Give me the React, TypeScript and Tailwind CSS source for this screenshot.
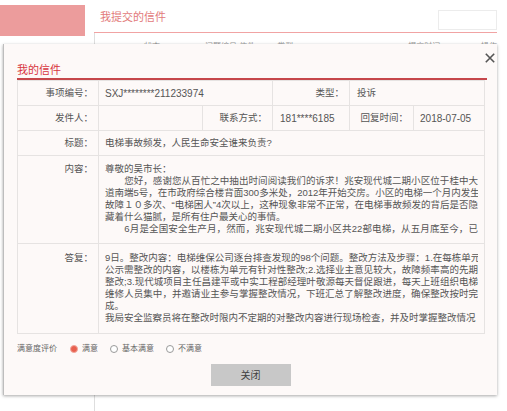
import React from 'react';

type Line = { text: string; full: boolean };

const contentLines: Line[] = [
  { text: '尊敬的吴市长：', full: false },
  { text: '\u3000\u3000您好，感谢您从百忙之中抽出时间阅读我们的诉求！兆安现代城二期小区位于桂中大', full: true },
  { text: '道南端5号，在市政府综合楼背面300多米处，2012年开始交房。小区的电梯一个月内发生', full: true },
  { text: '故障１０多次、“电梯困人”4次以上，这种现象非常不正常，在电梯事故频发的背后是否隐', full: true },
  { text: '藏着什么猫腻，是所有住户最关心的事情。', full: false },
  { text: '\u3000\u30006月是全国安全生产月，然而，兆安现代城二期小区共22部电梯，从五月底至今，已', full: true },
];

const replyLines: Line[] = [
  { text: '9日。整改内容：电梯维保公司逐台排查发现的98个问题。整改方法及步骤：1.在每栋单元', full: true },
  { text: '公示需整改的内容，以楼栋为单元有针对性整改;2.选择业主意见较大，故障频率高的先期', full: true },
  { text: '整改;3.现代城项目主任昌建平或中实工程部经理叶敬源每天督促跟进，每天上班组织电梯', full: true },
  { text: '维修人员集中，并邀请业主参与掌握整改情况，下班汇总了解整改进度，确保整改按时完', full: true },
  { text: '成。', full: false },
  { text: '我局安全监察员将在整改时限内不定期的对整改内容进行现场检查，并及时掌握整改情况', full: false },
];

const Lines: React.FC<{ lines: Line[] }> = ({ lines }) => (
  <>
    {lines.map((l, i) => (
      <div
        key={i}
        className={`whitespace-nowrap leading-[12px] ${l.full ? 'text-justify [text-align-last:justify]' : ''}`}
      >
        {l.text}
      </div>
    ))}
  </>
);

const Label: React.FC<{ children: React.ReactNode; top?: boolean; pt?: string }> = ({ children, top, pt }) => (
  <td
    className={`border border-[#e6e3e2] pr-[5px] text-right ${top ? `align-top ${pt}` : 'align-middle'}`}
  >
    {children}
  </td>
);

const Radio: React.FC<{ checked?: boolean; label: string }> = ({ checked, label }) => (
  <label className="flex items-center gap-[4px]">
    {checked ? (
      <span className="block h-[8px] w-[8px] rounded-full border border-[#f2a79c] bg-[#e8604f]" />
    ) : (
      <span className="block h-[8px] w-[8px] rounded-full border border-[#9a9a9a] bg-white" />
    )}
    <span>{label}</span>
  </label>
);

export default function App() {
  return (
    <div className="relative h-[411px] w-[507px] overflow-hidden bg-white font-['Liberation_Sans','Noto_Sans_CJK_SC',sans-serif]">
      {/* page behind the dialog */}
      <div className="flex">
        <div className="mt-[5px] h-[31px] w-[85px] bg-[#ec9c9c]" />
        <div className="ml-[9px] mr-[10px] flex-1">
          <div className="flex h-[33px] items-start justify-between border-b border-[#f1a3a3]">
            <span className="mt-[10px] pl-[6px] text-[11px] leading-[14px] text-[#e27a7a]">我提交的信件</span>
            <div className="mt-[10px] h-[20px] w-[59px] border border-[#ececec]" />
          </div>
          <div className="flex h-[28px] items-center border-l border-[#dedede] text-[8px] text-[#999]">
            <span className="ml-[49px]">状态</span>
            <span className="ml-[45px]">问题编号/信件</span>
            <span className="ml-[22px]">类型</span>
            <span className="ml-[115px]">提交时间</span>
            <span className="ml-auto">操作</span>
          </div>
          <div className="h-[400px] border-l border-[#dedede]" />
        </div>
      </div>

      {/* dialog */}
      <div className="absolute left-[3px] top-[44px] h-[351px] w-[494px] border-l border-[#bdbdbd] bg-[#fdf9f8] pl-[13px] pr-[10px] shadow-[0_1px_3px_rgba(0,0,0,0.35)]">
        <button className="absolute right-[2px] top-[9px] h-[10px] w-[10px] text-[#555]">
          <svg viewBox="0 0 10 10" className="h-[10px] w-[10px]" fill="none" stroke="currentColor" strokeWidth="1.6">
            <path d="M0.8 0.8 L9.2 9.2 M9.2 0.8 L0.8 9.2" />
          </svg>
        </button>

        <div className="h-[36px] border-b-2 border-[#c6474b] pt-[13px]">
          <span className="text-[11px] leading-[14px] text-[#d8363e]">我的信件</span>
        </div>

        <table className="w-[467px] table-fixed border-collapse text-[9.5px] text-[#555]">
          <colgroup>
            <col className="w-[81px]" />
            <col className="w-[104px]" />
            <col className="w-[70px]" />
            <col className="w-[77px]" />
            <col className="w-[64px]" />
            <col className="w-[71px]" />
          </colgroup>
          <tbody>
            <tr className="h-[25px]">
              <Label>事项编号：</Label>
              <td colSpan={2} className="border border-[#e6e3e2] pl-[6px] text-[10px]">SXJ********211233974</td>
              <Label>类型：</Label>
              <td colSpan={2} className="border border-[#e6e3e2] pl-[7px]">投诉</td>
            </tr>
            <tr className="h-[25px]">
              <Label>发件人：</Label>
              <td className="border border-[#e6e3e2]" />
              <Label>联系方式：</Label>
              <td className="border border-[#e6e3e2] pl-[7px] text-[10px]">181****6185</td>
              <Label>回复时间：</Label>
              <td className="border border-[#e6e3e2] pl-[6px] text-[10px]">2018-07-05</td>
            </tr>
            <tr className="h-[25px]">
              <Label>标题：</Label>
              <td colSpan={5} className="border border-[#e6e3e2] pl-[6px]">电梯事故频发，人民生命安全谁来负责?</td>
            </tr>
            <tr className="h-[88px]">
              <Label top pt="pt-[7px]">
                <div className="leading-[12px]">内容：</div>
              </Label>
              <td colSpan={5} className="border border-[#e6e3e2] px-[6px] pt-[7px] align-top">
                <div className="h-[80px] overflow-hidden">
                  <Lines lines={contentLines} />
                </div>
              </td>
            </tr>
            <tr className="h-[90px]">
              <Label top pt="pt-[8px]">
                <div className="leading-[12px]">答复：</div>
              </Label>
              <td colSpan={5} className="border border-[#e6e3e2] px-[6px] pt-[8px] align-top">
                <div className="h-[80px] overflow-hidden">
                  <Lines lines={replyLines} />
                </div>
              </td>
            </tr>
          </tbody>
        </table>

        <div className="mt-[8px] flex h-[14px] items-center text-[8px] text-[#666]">
          <span className="mr-[13px]">满意度评价</span>
          <div className="flex items-center gap-[12px]">
            <Radio checked label="满意" />
            <Radio label="基本满意" />
            <Radio label="不满意" />
          </div>
        </div>

        <div className="mt-[8px] flex justify-center pr-[3px]">
          <button className="h-[22px] w-[80px] bg-[#c8c8c8] text-[10px] text-[#3f3f3f]">关闭</button>
        </div>
      </div>
    </div>
  );
}
